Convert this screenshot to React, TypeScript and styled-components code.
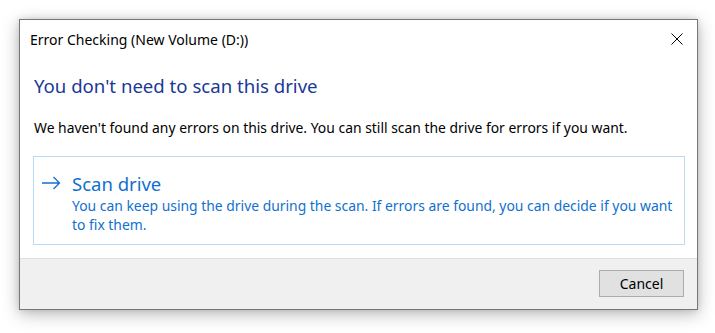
import React from "react";
import styled, { createGlobalStyle } from "styled-components";

const Global = createGlobalStyle`
  html, body { margin: 0; padding: 0; background: #ffffff; }
  body { font-family: "Noto Sans", "Open Sans", sans-serif; }
  * { box-sizing: border-box; }
`;

const Page = styled.div`
  padding: 19px 0 0 19px;
  width: 715px;
  height: 333px;
`;

const Window = styled.div`
  width: 679px;
  height: 291px;
  border: 1px solid #777777;
  background: #ffffff;
  display: flex;
  flex-direction: column;
  box-shadow: 0 4px 16px rgba(0, 0, 0, 0.28), 0 0 6px rgba(0, 0, 0, 0.12);
`;

const TitleBar = styled.div`
  height: 38px;
  flex: none;
  display: flex;
  align-items: center;
  justify-content: space-between;
  padding: 0 14px 0 10px;
  font-size: 14px;
  color: #000000;
`;

const CloseBox = styled.div`
  width: 12px;
  height: 12px;
  display: flex;
  margin-top: -1px;
`;

const Body = styled.div`
  flex: 1;
  display: flex;
  flex-direction: column;
  padding: 16px 12px 0 13px;
`;

const Heading = styled.div`
  font-size: 18.6px;
  color: #1a3898;
  padding-left: 1px;
  line-height: 24px;
`;

const Message = styled.div`
  margin-top: 20px;
  font-size: 13.9px;
  color: #000000;
  line-height: 20px;
  padding-left: 1px;
`;

const CommandLink = styled.div`
  margin-top: 18px;
  border: 1px solid #b9dcf4;
  height: 89px;
  display: flex;
  padding: 14px 8px 0 7px;
  gap: 11px;
  color: #1170cf;
`;

const Arrow = styled.div`
  width: 20px;
  height: 20px;
  margin-top: 2px;
  display: flex;
  flex: none;
`;

const LinkText = styled.div`
  display: flex;
  flex-direction: column;
`;

const LinkTitle = styled.div`
  font-size: 18.5px;
  line-height: 25px;
`;

const LinkNote = styled.div`
  font-size: 13.9px;
  line-height: 19px;
`;

const Footer = styled.div`
  height: 51px;
  flex: none;
  background: #f0f0f0;
  border-top: 1px solid #dfdfdf;
  display: flex;
  justify-content: flex-end;
  padding: 11px 13px 0 0;
`;

const Button = styled.div`
  width: 85px;
  height: 27px;
  background: #e1e1e1;
  border: 1px solid #adadad;
  font-size: 14px;
  display: flex;
  align-items: center;
  justify-content: center;
  color: #000000;
`;

export default function App() {
  return (
    <>
      <Global />
      <Page>
        <Window>
          <TitleBar>
            <span>Error Checking (New Volume (D:))</span>
            <CloseBox>
              <svg width="12" height="12" viewBox="0 0 12 12">
                <path d="M0.5 0.5 L11.5 11.5 M11.5 0.5 L0.5 11.5" stroke="#000" strokeWidth="1" fill="none" />
              </svg>
            </CloseBox>
          </TitleBar>
          <Body>
            <Heading>You don't need to scan this drive</Heading>
            <Message>
              We haven't found any errors on this drive. You can still scan the drive for errors if you want.
            </Message>
            <CommandLink>
              <Arrow>
                <svg width="20" height="20" viewBox="0 0 20 20">
                  <path d="M1 10 H18.5 M12.5 4 L18.5 10 L12.5 16" stroke="#1170cf" strokeWidth="1.3" fill="none" />
                </svg>
              </Arrow>
              <LinkText>
                <LinkTitle>Scan drive</LinkTitle>
                <LinkNote>
                  You can keep using the drive during the scan. If errors are found, you can decide if you want
                  <br />
                  to fix them.
                </LinkNote>
              </LinkText>
            </CommandLink>
          </Body>
          <Footer>
            <Button>Cancel</Button>
          </Footer>
        </Window>
      </Page>
    </>
  );
}
